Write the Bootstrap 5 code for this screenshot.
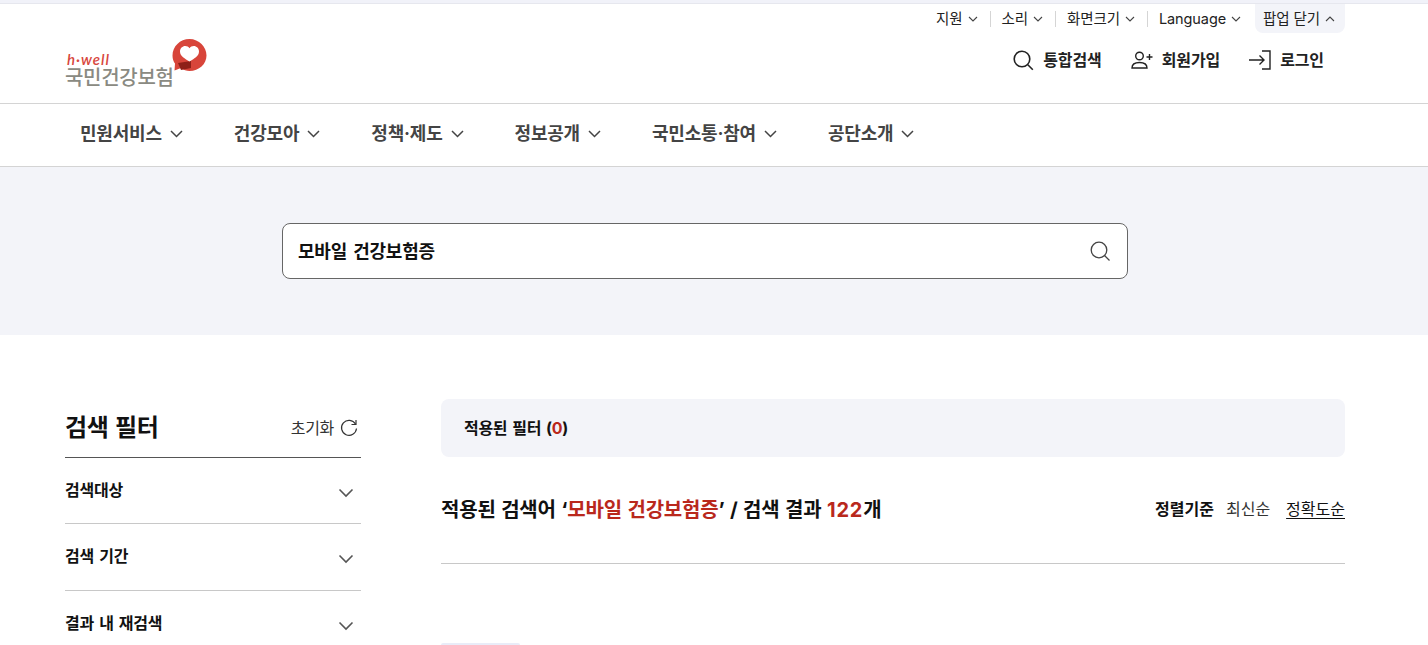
<!DOCTYPE html>
<html lang="ko">
<head>
  <meta charset="utf-8">
  <title>통합검색</title>
  <link href="https://cdn.jsdelivr.net/npm/bootstrap@5.3.2/dist/css/bootstrap.min.css" rel="stylesheet" />
  <style>
    html, body { height: 645px; overflow: hidden; }
    body { font-family: Inter, "Noto Sans CJK KR", sans-serif; color: #111; background: #fff; }
    svg { display: block; flex: none; }
    .top-strip { height: 4px; background: #f1f2f9; border-bottom: 1px solid #e6e7ee; }
    .page-wrap { width: 1280px; margin-left: 65px; }
    .util-bar { height: 29px; font-size: 14.5px; letter-spacing: -.1px; color: #222; }
    .util-item { padding: 0 12px 0 12px; position: relative; height: 29px; gap: 5px; }
    .util-item + .util-item::before { content: ""; position: absolute; left: 0; top: 7px; height: 16px; width: 1px; background: #d5d5d5; }
    .util-close { background: #f3f4f9; border-radius: 0 0 8px 8px; padding: 0 10px 0 8px; margin-left: 2px; }
    .util-close::before { display: none; }
    .brand-row { height: 70px; }
    .logo-box { width: 142px; height: 50px; margin-top: -1px; position: relative; }
    .logo-well { position: absolute; left: 2px; top: 9px; font: italic 600 15px/14px Lato, sans-serif; color: #d8473d; letter-spacing: 1px; }
    .logo-name { position: absolute; left: 0; top: 25px; font-size: 20px; line-height: 20px; font-weight: 500; color: #8a8a82; letter-spacing: -.3px; white-space: nowrap; }
    .logo-heart { position: absolute; left: 107px; top: -5px; }
    .member-links { gap: 29px; padding-right: 21px; padding-bottom: 16px; font-size: 16px; font-weight: 700; letter-spacing: -.1px; color: #222; }
    .member-links > div { gap: 9px; }
    .main-nav { height: 64px; border-top: 1px solid #d4d4d4; border-bottom: 1px solid #d4d4d4; }
    .main-nav .page-wrap { padding-left: 15px; padding-bottom: 3px; gap: 51px; height: 100%; font-size: 18px; font-weight: 700; letter-spacing: -.2px; color: #444; }
    .main-nav .nav-cell { gap: 8px; }
    .search-band { height: 168px; background: #f3f4f9; padding-top: 56px; }
    .search-box { width: 846px; height: 56px; margin-left: 282px; background: #fff; border: 1px solid #666; border-radius: 8px; padding: 0 16px 0 15px; font-size: 18px; font-weight: 700; letter-spacing: -.2px; word-spacing: 2px; }
    .result-layout { padding-top: 64px; gap: 80px; }
    .filter-col { width: 296px; flex: none; }
    .filter-head { height: 59px; border-bottom: 1px solid #555; padding-bottom: 1px; }
    .filter-title { font-size: 24px; font-weight: 700; letter-spacing: -.3px; word-spacing: 1px; }
    .reset-link { font-size: 16px; letter-spacing: -.3px; color: #333; gap: 6px; padding-right: 3px; }
    .filter-row { height: 66px; border-bottom: 1px solid #c8c8c8; font-size: 16px; font-weight: 700; letter-spacing: -.2px; word-spacing: 1.5px; padding-right: 7px; padding-bottom: 2px; }
    .filter-row:nth-child(3) { height: 67px; }
    .filter-row:last-child { border-bottom: 0; }
    .filter-row svg { margin-top: 6px; }
    .result-col { width: 904px; flex: none; }
    .applied-box { height: 58px; background: #f3f4f9; border-radius: 8px; padding: 0 23px; font-size: 16px; font-weight: 700; letter-spacing: -.3px; word-spacing: 1.5px; }
    .accent-red { color: #b9281c; }
    .summary-row { height: 107px; border-bottom: 1px solid #c8c8c8; }
    .summary-text { font-size: 20px; font-weight: 700; letter-spacing: -.2px; word-spacing: 1px; }
    .result-count { letter-spacing: .8px; }
    .sort-box { font-size: 16px; letter-spacing: 0; gap: 12px; margin-top: -2px; color: #333; }
    .sort-box strong { color: #111; }
    .sort-box u { color: #111; text-underline-offset: 3px; padding-left: 4px; }
    .tab-peek { width: 79px; height: 2px; margin-top: 79px; background: #e9ecf8; border-radius: 4px 4px 0 0; }
  </style>
</head>
<body>
<div class="top-strip"></div>

<header>
  <div class="page-wrap">
    <div class="util-bar d-flex justify-content-end">
      <div class="util-item d-flex align-items-center">지원 <svg width="10" height="6" viewBox="0 0 10 6" fill="none" stroke="#444" stroke-width="1.1"><path d="M1 1l4 4 4-4"/></svg></div>
      <div class="util-item d-flex align-items-center">소리 <svg width="10" height="6" viewBox="0 0 10 6" fill="none" stroke="#444" stroke-width="1.1"><path d="M1 1l4 4 4-4"/></svg></div>
      <div class="util-item d-flex align-items-center">화면크기 <svg width="10" height="6" viewBox="0 0 10 6" fill="none" stroke="#444" stroke-width="1.1"><path d="M1 1l4 4 4-4"/></svg></div>
      <div class="util-item d-flex align-items-center">Language <svg width="10" height="6" viewBox="0 0 10 6" fill="none" stroke="#444" stroke-width="1.1"><path d="M1 1l4 4 4-4"/></svg></div>
      <div class="util-item util-close d-flex align-items-center">팝업 닫기 <svg width="10" height="6" viewBox="0 0 10 6" fill="none" stroke="#444" stroke-width="1.1"><path d="M1 5l4-4 4 4"/></svg></div>
    </div>
    <div class="brand-row d-flex justify-content-between align-items-center">
      <div class="logo-box">
        <span class="logo-well">h·well</span>
        <span class="logo-name">국민건강보험</span>
        <svg class="logo-heart" width="35" height="35" viewBox="0 0 35 35">
          <path d="M17.500 1C8 1 .5 8.500 .5 17.500c0 3.500 1 6 2.500 8l-.5 7 6.500-2.500c2.500 2 5.500 3 8.500 3 9.500 0 17-7 17-15.500S27 1 17.500 1z" fill="#d8453a"/>
          <path d="M6 25l13-2v7l-10 2z" fill="#8e2018"/>
          <path d="M17.500 23.500c-4.500-3-9.500-5-9.500-10 0-3.200 2.500-5.500 5.200-5.500 1.800 0 3.400.8 4.300 2.200.9-1.400 2.500-2.200 4.300-2.200 2.700 0 5.200 2.300 5.200 5.500 0 5-5 7-9.500 10z" fill="#fff"/>
        </svg>
      </div>
      <div class="member-links d-flex align-items-center">
        <div class="d-flex align-items-center">
          <svg width="21" height="21" viewBox="0 0 21 21" fill="none" stroke="#222" stroke-width="1.6"><circle cx="9" cy="9" r="7.800"/><path d="M14.800 14.800l5 5"/></svg>
          통합검색
        </div>
        <div class="d-flex align-items-center">
          <svg width="22" height="20" viewBox="0 0 22 20" fill="none" stroke="#222" stroke-width="1.4"><circle cx="8.500" cy="6" r="3.800"/><path d="M1 18c0-3.500 3-5.500 7.500-5.500S16 14.500 16 18z"/><path d="M15.500 7h6M18.500 4v6"/></svg>
          회원가입
        </div>
        <div class="d-flex align-items-center">
          <svg width="22" height="20" viewBox="0 0 22 20" fill="none" stroke="#222" stroke-width="1.4"><path d="M13 1h8v18h-8"/><path d="M0 10h15M10.500 5.500L15 10l-4.500 4.500"/></svg>
          로그인
        </div>
      </div>
    </div>
  </div>

  <nav class="main-nav">
    <div class="page-wrap d-flex align-items-center">
      <div class="nav-cell d-flex align-items-center">민원서비스 <svg width="13" height="8" viewBox="0 0 13 8" fill="none" stroke="#444" stroke-width="1.5"><path d="M1 1l5.500 5.500L12 1"/></svg></div>
      <div class="nav-cell d-flex align-items-center">건강모아 <svg width="13" height="8" viewBox="0 0 13 8" fill="none" stroke="#444" stroke-width="1.5"><path d="M1 1l5.500 5.500L12 1"/></svg></div>
      <div class="nav-cell d-flex align-items-center">정책·제도 <svg width="13" height="8" viewBox="0 0 13 8" fill="none" stroke="#444" stroke-width="1.5"><path d="M1 1l5.500 5.500L12 1"/></svg></div>
      <div class="nav-cell d-flex align-items-center">정보공개 <svg width="13" height="8" viewBox="0 0 13 8" fill="none" stroke="#444" stroke-width="1.5"><path d="M1 1l5.500 5.500L12 1"/></svg></div>
      <div class="nav-cell d-flex align-items-center">국민소통·참여 <svg width="13" height="8" viewBox="0 0 13 8" fill="none" stroke="#444" stroke-width="1.5"><path d="M1 1l5.500 5.500L12 1"/></svg></div>
      <div class="nav-cell d-flex align-items-center">공단소개 <svg width="13" height="8" viewBox="0 0 13 8" fill="none" stroke="#444" stroke-width="1.5"><path d="M1 1l5.500 5.500L12 1"/></svg></div>
    </div>
  </nav>
</header>

<section class="search-band">
  <div class="search-box d-flex justify-content-between align-items-center">
    <span>모바일 건강보험증</span>
    <svg width="22" height="22" viewBox="0 0 22 22" fill="none" stroke="#444" stroke-width="1.3"><circle cx="10" cy="10" r="7.800"/><path d="M15.500 15.500l5 5"/></svg>
  </div>
</section>

<main class="page-wrap result-layout d-flex">
  <aside class="filter-col">
    <div class="filter-head d-flex justify-content-between align-items-center">
      <span class="filter-title">검색 필터</span>
      <span class="reset-link d-flex align-items-center">초기화
        <svg width="18" height="18" viewBox="0 0 18 18" fill="none" stroke="#333" stroke-width="1.2"><path d="M15.500 5A7.500 7.500 0 1 0 16.500 9.500"/><path d="M16 1v4.500h-4.500"/></svg>
      </span>
    </div>
    <div class="filter-row d-flex justify-content-between align-items-center">검색대상 <svg width="16" height="10" viewBox="0 0 16 10" fill="none" stroke="#555" stroke-width="1.6"><path d="M1.500 1.500L8 8l6.500-6.500"/></svg></div>
    <div class="filter-row d-flex justify-content-between align-items-center">검색 기간 <svg width="16" height="10" viewBox="0 0 16 10" fill="none" stroke="#555" stroke-width="1.6"><path d="M1.500 1.500L8 8l6.500-6.500"/></svg></div>
    <div class="filter-row d-flex justify-content-between align-items-center">결과 내 재검색 <svg width="16" height="10" viewBox="0 0 16 10" fill="none" stroke="#555" stroke-width="1.6"><path d="M1.500 1.500L8 8l6.500-6.500"/></svg></div>
  </aside>

  <div class="result-col">
    <div class="applied-box d-flex align-items-center"><span>적용된 필터 (<span class="accent-red">0</span>)</span></div>
    <div class="summary-row d-flex justify-content-between align-items-center">
      <div class="summary-text">적용된 검색어 ‘<span class="accent-red">모바일 건강보험증</span>’ / 검색 결과 <span class="accent-red result-count">122</span>개</div>
      <div class="sort-box d-flex align-items-center">
        <strong>정렬기준</strong>
        <span>최신순</span>
        <u>정확도순</u>
      </div>
    </div>
    <div class="tab-peek"></div>
  </div>
</main>

<script src="https://cdn.jsdelivr.net/npm/bootstrap@5.3.2/dist/js/bootstrap.bundle.min.js"></script>
</body>
</html>
